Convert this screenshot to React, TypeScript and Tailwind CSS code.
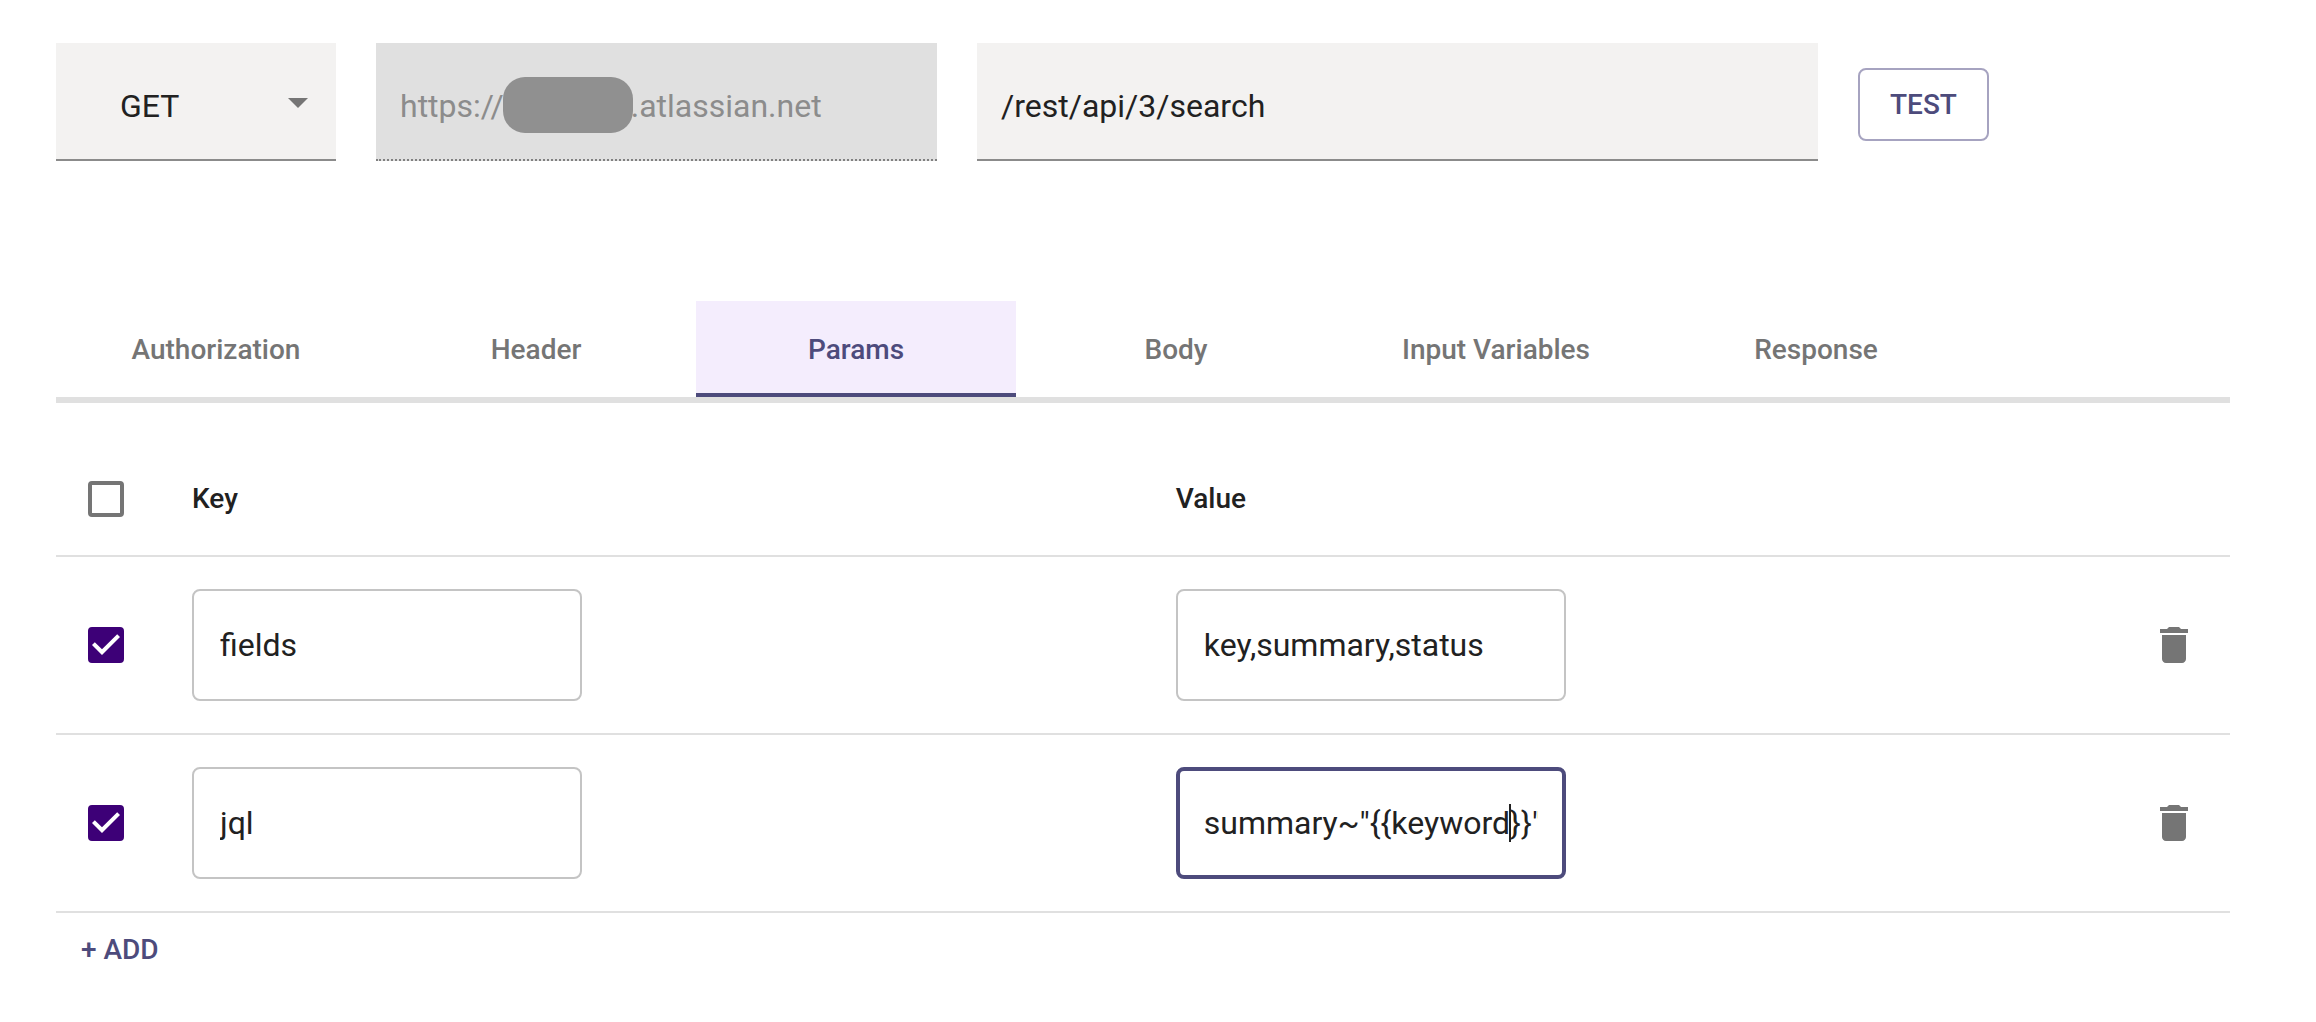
import { useState } from "react";

const REDACTED = "\u00a0".repeat(16);

const TABS = ["Authorization", "Header", "Params", "Body", "Input Variables", "Response"];

type Param = { key: string; value: string; active?: boolean };

const PARAMS: Param[] = [
  { key: "fields", value: "key,summary,status" },
  { key: "jql", value: 'summary~"{{keyword}}"', active: true },
];

function Checkbox({ label, defaultChecked }: { label: string; defaultChecked?: boolean }) {
  return (
    <label className="relative block size-9">
      <input
        type="checkbox"
        aria-label={label}
        defaultChecked={defaultChecked}
        className="peer block size-9 appearance-none rounded-sm border-4 border-[#757575] checked:border-[#3d0077] checked:bg-[#3d0077]"
      />
      <svg
        viewBox="3 3 18 18"
        className="pointer-events-none absolute inset-0 hidden size-9 fill-white peer-checked:block"
        aria-hidden="true"
      >
        <path d="M10 17l-5-5 1.41-1.41L10 14.17l7.59-7.59L19 8l-9 9z" />
      </svg>
    </label>
  );
}

function TextField({ label, value, active }: { label: string; value: string; active?: boolean }) {
  return (
    <div className="relative w-[390px]">
      <input
        type="text"
        aria-label={label}
        defaultValue={value}
        className={
          active
            ? "block h-28 w-full rounded-lg border-4 border-[#4d4b7c] px-6 text-[32px] outline-none"
            : "block h-28 w-full rounded-lg border-2 border-[#c4c4c4] px-[26px] text-[32px] outline-none"
        }
      />
      {active && <span className="absolute top-[37px] left-[333px] h-[38px] w-0.5 bg-[#212121]" />}
    </div>
  );
}

function TrashIcon() {
  return (
    <svg viewBox="0 0 24 24" className="size-12 fill-[#757575]" aria-hidden="true">
      <path d="M6 19c0 1.1.9 2 2 2h8c1.1 0 2-.9 2-2V7H6v12zM19 4h-3.5l-1-1h-5l-1 1H5v2h14V4z" />
    </svg>
  );
}

export default function App() {
  const [tab, setTab] = useState("Params");

  return (
    <main className="min-h-screen bg-white pt-[43px] pr-[86px] pl-14 font-['Roboto',sans-serif] text-[#212121]">
      <form className="grid grid-cols-[280fr_561fr_841fr_372fr] items-start gap-10">
        <div className="relative">
          <select
            aria-label="Method"
            className="block w-full appearance-none border-b-2 border-[#8b8b8b] bg-[#f3f2f1] pt-11 pr-14 pb-[34px] pl-16 text-[32px] leading-[38px]"
          >
            <option>GET</option>
            <option>POST</option>
            <option>PUT</option>
            <option>DELETE</option>
          </select>
          <svg
            viewBox="0 0 24 24"
            className="pointer-events-none absolute top-[35px] right-3.5 size-12 fill-[#757575]"
            aria-hidden="true"
          >
            <path d="M7 10l5 5 5-5z" />
          </svg>
        </div>

        <div className="relative">
          <input
            type="text"
            aria-label="Host"
            disabled
            value={`https://${REDACTED}.atlassian.net`}
            className="block h-[118px] w-full border-b-2 border-dotted border-[#808080] bg-[#e0e0e0] px-6 pt-11 pb-[34px] text-[32px] leading-[38px] text-[#8c8c8c]"
          />
          <span className="absolute top-[34px] left-[127px] h-14 w-[130px] rounded-[22px] bg-[#909090]" />
        </div>

        <input
          type="text"
          aria-label="Path"
          defaultValue="/rest/api/3/search"
          className="block h-[118px] w-full border-b-2 border-[#8b8b8b] bg-[#f3f2f1] px-6 pt-11 pb-[34px] text-[32px] leading-[38px] outline-none"
        />

        <button
          type="button"
          className="mt-[25px] justify-self-start rounded-lg border-2 border-[#a6a3c0] px-[30px] py-2.5 text-[28px] leading-[49px] font-medium text-[#4d4b7c]"
        >
          TEST
        </button>
      </form>

      <div role="tablist" className="mt-[140px] flex border-b-6 border-[#e0e0e0]">
        {TABS.map((name) => (
          <button
            key={name}
            type="button"
            role="tab"
            aria-selected={name === tab}
            onClick={() => setTab(name)}
            className={
              name === tab
                ? "h-24 w-80 bg-[#f4edfd] pt-0.5 text-[28px] font-medium text-[#4d4b7c] shadow-[inset_0_-4px_0_#4d4b7c]"
                : "h-24 w-80 pt-0.5 text-[28px] font-medium text-[#757575]"
            }
          >
            {name}
          </button>
        ))}
      </div>

      <table className="mt-10 w-full table-fixed border-collapse text-left">
        <thead>
          <tr className="h-[113px] border-b-2 border-[#e0e0e0] text-[28px]">
            <th className="w-[136px] pl-8">
              <Checkbox label="Select all" />
            </th>
            <th className="w-[45.25%] font-medium">Key</th>
            <th className="font-medium">Value</th>
            <td className="w-28" />
          </tr>
        </thead>
        <tbody>
          {PARAMS.map((p) => (
            <tr key={p.key} className="h-[178px] border-b-2 border-[#e0e0e0]">
              <td className="pl-8">
                <Checkbox label={`Enable ${p.key}`} defaultChecked />
              </td>
              <td>
                <TextField label="Key" value={p.key} />
              </td>
              <td>
                <TextField label="Value" value={p.value} active={p.active} />
              </td>
              <td className="px-8">
                <button type="button" aria-label={`Delete ${p.key}`} className="block">
                  <TrashIcon />
                </button>
              </td>
            </tr>
          ))}
        </tbody>
      </table>

      <button type="button" className="ml-[9px] px-4 py-3 text-[28px] leading-[49px] font-medium text-[#4d4b7c]">
        + ADD
      </button>
    </main>
  );
}
